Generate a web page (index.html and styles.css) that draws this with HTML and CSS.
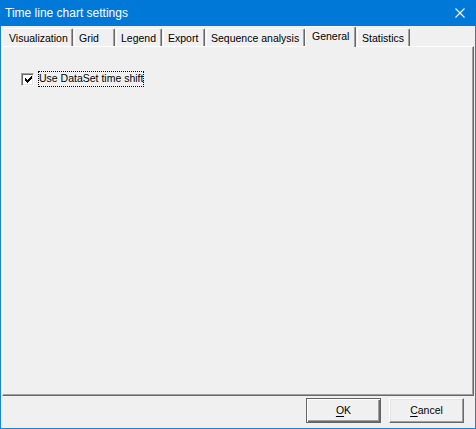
FILE: index.html
```html
<!DOCTYPE html>
<html>
<head>
<meta charset="utf-8">
<title>Time line chart settings</title>
<link rel="stylesheet" href="styles.css">
</head>
<body>
<div class="window">
  <div class="titlebar">
    <span class="title">Time line chart settings</span>
    <span class="close">
      <svg width="10" height="10" viewBox="0 0 10 10"><path d="M0.5 0.5 L9.5 9.5 M9.5 0.5 L0.5 9.5" stroke="#fff" stroke-width="1.1" fill="none"/></svg>
    </span>
  </div>
  <div class="client">
    <div class="tabctl">
      <div class="tabstrip">
        <div class="tab w-vis">Visualization</div>
        <div class="tab w-grid">Grid</div>
        <div class="tab w-legend">Legend</div>
        <div class="tab w-export">Export</div>
        <div class="tab w-seq">Sequence analysis</div>
        <div class="tab tab-active w-gen">General</div>
        <div class="tab w-stat">Statistics</div>
      </div>
      <div class="panel">
        <label class="check">
          <span class="box">
            <svg width="7" height="7" viewBox="0 0 7 7"><path d="M0 2h1v1h1v1h1v-1h1v-1h1v-1h1v-1h1v3h-1v1h-1v1h-1v1h-1v1h-1v-1h-1v-1h-1z" fill="#000"/></svg>
          </span>
          <span class="label">Use DataSet time shift</span>
        </label>
      </div>
    </div>
    <div class="footer">
      <button class="btn btn-default"><u>O</u>K</button>
      <button class="btn"><u>C</u>ancel</button>
    </div>
  </div>
</div>
</body>
</html>
```

FILE: styles.css
```css
* { box-sizing: border-box; }
html, body { margin: 0; padding: 0; }
body {
  width: 476px;
  height: 429px;
  background: #f0f0f0;
  font-family: "Liberation Sans", Arial, sans-serif;
  font-size: 10.5px;
  color: #000;
  overflow: hidden;
}
.window {
  width: 476px;
  height: 429px;
  border: 1px solid #1883d7;
  border-top: none;
  display: flex;
  flex-direction: column;
  background: #f0f0f0;
}
.titlebar {
  height: 26px;
  margin: 0 -1px;
  background: #0078d7;
  color: #fff;
  display: flex;
  align-items: center;
  justify-content: space-between;
  padding: 0 11px 1px 5px;
}
.title {
  font-size: 12px;
  font-family: "Liberation Sans", Arial, sans-serif;
}
.close { display: flex; }
.client {
  flex: 1;
  display: flex;
  flex-direction: column;
}
.tabctl {
  margin: 0 1px;
  display: flex;
  flex-direction: column;
}
.tabstrip {
  height: 20px;
  display: flex;
  align-items: flex-end;
}
.tab {
  height: 18px;
  margin-right: 1px;
  border-top: 1px solid #fff;
  border-left: 1px solid #fff;
  border-right: 1px solid #696969;
  box-shadow: inset -1px 0 0 #a0a0a0;
  border-radius: 2px 2px 0 0;
  display: flex;
  align-items: center;
  justify-content: flex-start;
  padding: 1px 0 0 4px;
  white-space: nowrap;
  background: #f0f0f0;
}
.tab-active {
  height: 21px;
  margin-left: -1px;
  margin-bottom: -1px;
  position: relative;
  z-index: 1;
  padding: 0 0 2px 6px;
}
.w-vis { width: 71px; padding-left: 6px; }
.w-grid { width: 41px; }
.w-legend { width: 46px; }
.w-export { width: 42px; }
.w-seq { width: 99px; }
.w-gen { width: 51px; }
.w-stat { width: 53px; }
.panel {
  height: 350px;
  border-top: 1px solid #fff;
  border-left: 1px solid #fff;
  border-right: 1px solid #696969;
  border-bottom: 1px solid #696969;
  box-shadow: inset -1px -1px 0 #a0a0a0;
  padding: 24px 0 0 18px;
}
.check {
  display: flex;
  align-items: center;
}
.box {
  width: 13px;
  height: 13px;
  background: #fff;
  border-top: 1px solid #a0a0a0;
  border-left: 1px solid #a0a0a0;
  border-right: 1px solid #fff;
  border-bottom: 1px solid #fff;
  box-shadow: inset 1px 1px 0 #696969, inset -1px -1px 0 #e3e3e3;
  display: flex;
  align-items: center;
  justify-content: center;
  padding: 1px 0 0 1px;
}
.box svg { display: block; }
.label {
  margin-left: 4px;
  padding: 1px 1px 2px 1px;
  outline: 1px dotted #000;
  outline-offset: -1px;
  line-height: 13px;
}
.footer {
  flex: 1;
  display: flex;
  justify-content: flex-end;
  align-items: flex-start;
  gap: 8px;
  padding: 2px 11px 0 0;
}
.btn {
  width: 75px;
  height: 25px;
  margin: 0;
  padding: 0 0 1px;
  font-family: "Liberation Sans", Arial, sans-serif;
  font-size: 10.5px;
  color: #000;
  background: #f0f0f0;
  border-top: 1px solid #fff;
  border-left: 1px solid #fff;
  border-right: 1px solid #696969;
  border-bottom: 1px solid #696969;
  box-shadow: inset -1px -1px 0 #a0a0a0, inset 1px 1px 0 #e3e3e3;
  border-radius: 0;
}
.btn-default {
  border: 1px solid #646464;
  box-shadow: inset 1px 1px 0 #fff, inset -1px -1px 0 #696969, inset -2px -2px 0 #a0a0a0;
}
.btn u { text-decoration: underline; text-underline-offset: 2px; }
```
